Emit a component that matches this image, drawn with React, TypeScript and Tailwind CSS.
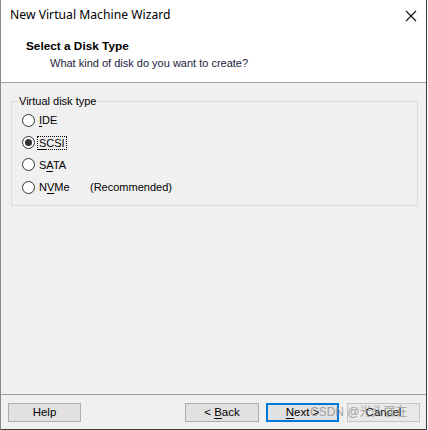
import React, { useState } from 'react';

const uiFont = { fontFamily: '"Liberation Sans", "Noto Sans CJK SC", sans-serif' };
const titleFont = { fontFamily: '"Noto Sans", "Noto Sans CJK SC", sans-serif' };

const diskTypes = [
  { id: 'ide', pre: '', key: 'I', post: 'DE', note: '' },
  { id: 'scsi', pre: '', key: 'S', post: 'CSI', note: '' },
  { id: 'sata', pre: 'S', key: 'A', post: 'TA', note: '' },
  { id: 'nvme', pre: 'N', key: 'V', post: 'Me', note: '(Recommended)' }
];

const Radio: React.FC<{ checked: boolean }> = ({ checked }) => (
  <span className="w-[13px] h-[13px] rounded-full border border-[#333333] bg-white flex items-center justify-center shrink-0">
    {checked && <span className="w-[7px] h-[7px] rounded-full bg-[#333333]" />}
  </span>
);

const Button: React.FC<{ className?: string; children: React.ReactNode }> = ({ className = '', children }) => (
  <button
    type="button"
    className={`h-[19px] flex items-center justify-center text-[11.5px] leading-none text-black ${className}`}
  >
    {children}
  </button>
);

export default function App() {
  const [selected, setSelected] = useState('scsi');

  return (
    <div className="w-[428px] h-[430px] bg-white" style={uiFont}>
      <div className="w-[427px] h-[430px] flex flex-col border-l border-[#8a8a8a] border-r border-r-[#3c3c3c] border-b border-b-[#3c3c3c]">
        {/* title bar */}
        <div className="h-[31px] bg-white flex items-center pl-[9px] pr-[9px]">
          <span className="text-[12.2px] text-black" style={titleFont}>New Virtual Machine Wizard</span>
          <svg className="ml-auto" width="12" height="12" viewBox="0 0 12 12">
            <path d="M1 1 L11 11 M11 1 L1 11" stroke="#111" strokeWidth="1.1" fill="none" />
          </svg>
        </div>

        {/* header */}
        <div className="h-[52px] bg-white border-b border-[#a0a0a0] pl-[25px] pt-[7px]">
          <div className="text-[11.8px] font-bold text-black leading-[16px]">Select a Disk Type</div>
          <div className="text-[11px] text-[#1b1b3a] leading-[16px] pl-[24px] mt-[1px]">What kind of disk do you want to create?</div>
        </div>

        {/* body */}
        <div className="flex-1 bg-[#f0f0f0] px-[10px] pt-[10px]">
          <fieldset className="border border-[#dcdcdc] w-[407px] pb-[6px]">
            <legend className="ml-[6px] px-[1px] text-[11px] leading-[16px] text-black">Virtual disk type</legend>
            <div className="pl-[10px]">
              {diskTypes.map(d => (
                <label
                  key={d.id}
                  className="h-[22.4px] flex items-center cursor-default"
                  onClick={() => setSelected(d.id)}
                >
                  <Radio checked={selected === d.id} />
                  <span className="ml-[2px] px-[1px] text-[11px] leading-[16px] text-black w-[53px]">
                    <span
                      className={
                        selected === d.id
                          ? 'outline outline-1 outline-dotted outline-black px-[1px]'
                          : 'px-[1px]'
                      }
                    >
                      {d.pre}
                      <span className="underline underline-offset-2">{d.key}</span>
                      {d.post}
                    </span>
                  </span>
                  {d.note && <span className="text-[11px] leading-[16px] text-black">{d.note}</span>}
                </label>
              ))}
            </div>
          </fieldset>
        </div>

        {/* footer */}
        <div className="relative h-[35px] bg-[#f0f0f0] border-t border-[#a0a0a0] flex items-start pt-[8px] pl-[7px]">
          <Button className="w-[73px] bg-[#e1e1e1] border border-[#adadad]">Help</Button>
          <Button className="ml-[104px] w-[74px] bg-[#e1e1e1] border border-[#adadad]">
            &lt;&nbsp;<span className="underline underline-offset-2">B</span>ack
          </Button>
          <Button className="ml-[7px] w-[73px] bg-[#e1e1e1] border-2 border-[#0078d7]">
            <span className="underline underline-offset-2">N</span>ext &gt;
          </Button>
          <Button className="ml-[8px] w-[73px] bg-[#e8e8e8] border border-[#c4c4c4]">Cancel</Button>
          <span className="absolute left-[309px] top-[9px] text-[12px] leading-[16px] text-[#8f8f8f]/80 pointer-events-none">
            CSDN @光头强在
          </span>
        </div>
      </div>
    </div>
  );
}
